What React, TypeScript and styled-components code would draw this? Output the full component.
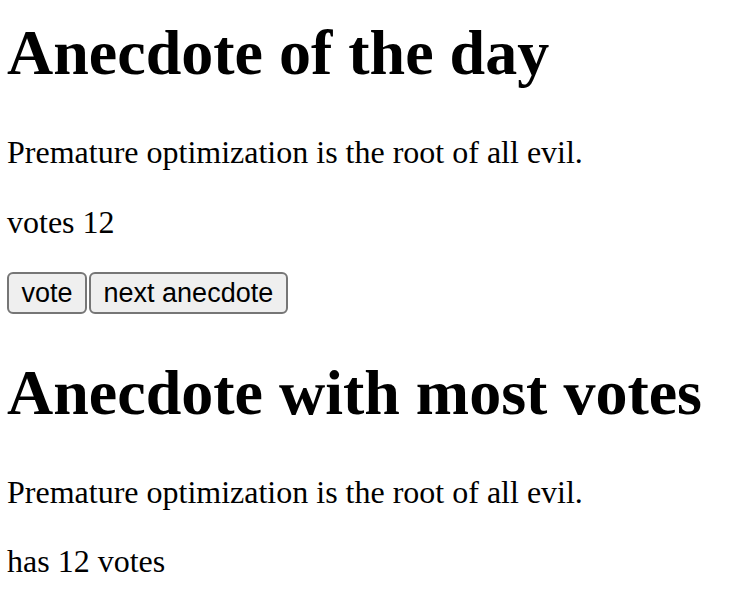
import React, { useState } from 'react';
import styled, { createGlobalStyle } from 'styled-components';

const GlobalStyle = createGlobalStyle`
  html, body {
    margin: 0;
    padding: 0;
    background: #fff;
  }
  body {
    font-family: 'Liberation Serif', 'Times New Roman', serif;
    color: #000;
  }
`;

const Page = styled.div`
  padding: 16px 7px 0;
`;

const Heading = styled.h1`
  margin: 0 0 44px;
  font-size: 64px;
  line-height: 74px;
  font-weight: 700;
`;

const Text = styled.p<{ $after?: number }>`
  margin: 0 0 ${({ $after = 33 }) => $after}px;
  font-size: 32px;
  line-height: 37px;
`;

const ButtonRow = styled.div`
  display: flex;
  gap: 2px;
  margin-bottom: 42px;
`;

const Button = styled.button`
  height: 42px;
  padding: 0 12.5px;
  font-family: 'Liberation Sans', Arial, sans-serif;
  font-size: 27px;
  color: #000;
  background: #efefef;
  border: 2px solid #767676;
  border-radius: 6px;
  cursor: pointer;
`;

const anecdotes = [
  'If it hurts, do it more often.',
  'Adding manpower to a late software project makes it later!',
  'Premature optimization is the root of all evil.',
];

function App() {
  const [selected, setSelected] = useState(2);
  const [votes, setVotes] = useState<number[]>([0, 0, 12]);

  const handleVote = () => {
    const copy = [...votes];
    copy[selected] += 1;
    setVotes(copy);
  };

  const handleNext = () => {
    setSelected(Math.floor(Math.random() * anecdotes.length));
  };

  const mostVoted = votes.indexOf(Math.max(...votes));

  return (
    <Page>
      <GlobalStyle />
      <Heading>Anecdote of the day</Heading>
      <Text>{anecdotes[selected]}</Text>
      <Text $after={31}>votes {votes[selected]}</Text>
      <ButtonRow>
        <Button onClick={handleVote}>vote</Button>
        <Button onClick={handleNext}>next anecdote</Button>
      </ButtonRow>
      <Heading>Anecdote with most votes</Heading>
      <Text $after={32}>{anecdotes[mostVoted]}</Text>
      <Text>has {votes[mostVoted]} votes</Text>
    </Page>
  );
}

export default App;
